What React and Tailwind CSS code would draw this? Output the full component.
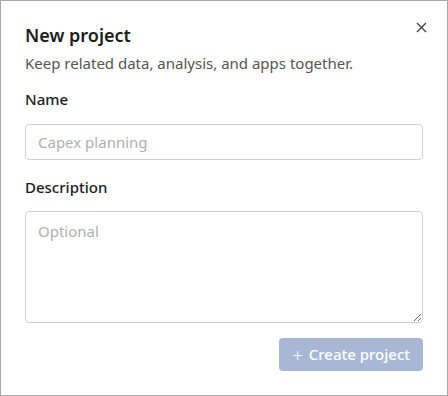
import React from 'react';

export default function App() {
  return (
    <div
      className="w-[448px] h-[396px] bg-white border border-[#a9a9a9] relative flex flex-col px-6 pt-[22px] text-[#1c1c1c]"
      style={{ fontFamily: '"Noto Sans", "Open Sans", sans-serif' }}
    >
      {/* Close button */}
      <button className="absolute top-[18px] right-[18px] w-4 h-4 flex items-center justify-center text-[#444]">
        <svg width="11" height="11" viewBox="0 0 11 11" fill="none" stroke="currentColor" strokeWidth="1.4">
          <path d="M1 1l9 9M10 1l-9 9" />
        </svg>
      </button>

      <h2 className="text-[18px] leading-6 font-semibold">New project</h2>
      <p className="mt-[6px] text-[15px] leading-5 text-[#555]">Keep related data, analysis, and apps together.</p>

      <label className="mt-[16px] text-[15px] leading-5 font-medium">Name</label>
      <input
        placeholder="Capex planning"
        className="mt-[15px] h-9 w-full rounded border border-[#d2d2d2] px-3 text-[15px] placeholder:text-[#b0b0b0] outline-none"
      />

      <label className="mt-[17px] text-[15px] leading-5 font-medium">Description</label>
      <textarea
        placeholder="Optional"
        className="mt-[14px] h-[112px] w-full rounded border border-[#d2d2d2] px-3 py-2 text-[15px] placeholder:text-[#b0b0b0] outline-none"
      />

      <div className="mt-[15px] flex justify-end">
        <button className="h-[33px] px-[13px] rounded bg-[#a8b8d4] text-white text-[15px] font-medium flex items-center gap-[6px]">
          <span className="text-[18px] leading-none font-light">+</span>
          <span>Create project</span>
        </button>
      </div>
    </div>
  );
}
